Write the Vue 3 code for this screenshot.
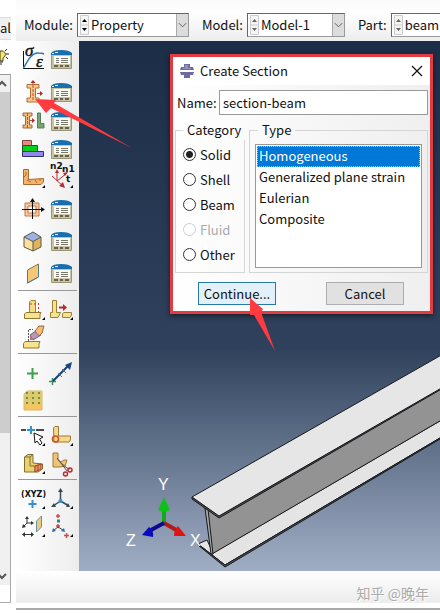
<script setup>
import { ref } from 'vue'

const module = ref('Property')
const model = ref('Model-1')
const part = ref('beam')

const sectionName = ref('section-beam')
const category = ref('Solid')
const type = ref('Homogeneous')

const categories = [
  { name: 'Solid' },
  { name: 'Shell' },
  { name: 'Beam' },
  { name: 'Fluid', disabled: true },
  { name: 'Other' }
]
const types = ['Homogeneous', 'Generalized plane strain', 'Eulerian', 'Composite']

const groups = [
  ['material', 'manager', 'section', 'manager', 'assign', 'manager', 'composite', 'manager',
    'beam-part', 'normals', 'skin', 'manager', 'solid', 'manager', 'shell', 'manager'],
  ['stringer', 'offset', 'eraser'],
  ['point', 'axis', 'mesh'],
  ['pick', 'corner', 'block', 'cut'],
  ['xyz', 'csys', 'plane', 'datum']
]
const withMenu = ['beam-part', 'normals', 'stringer', 'offset', 'pick', 'corner', 'block', 'xyz', 'csys', 'plane', 'datum']
</script>

<template>
  <div class="app">
    <aside class="side">
      <div class="tab">al</div>
      <div class="tip">
        <svg width="9" height="16" viewBox="0 0 9 16">
          <path d="M0 2C6 1 7 7 3 9V12H0Z" fill="#f6e36c" stroke="#4b451d" />
          <path d="M0 13H3M0 15H2M5 2L7 0M6 5H9M6 8L8 10" stroke="#222" />
        </svg>
      </div>
      <div class="scroll">
        <svg width="10" height="17" viewBox="0 0 10 17"><path d="M-2 11L2 7L6 11" fill="none" stroke="#555" stroke-width="2" /></svg>
        <div class="thumb"></div>
        <svg width="10" height="17" viewBox="0 0 10 17"><path d="M-2 6L2 10L6 6" fill="none" stroke="#555" stroke-width="2" /></svg>
      </div>
      <div class="side-end"></div>
    </aside>

    <div class="main">
      <header class="toolbar">
        <label for="module">Module:</label>
        <div class="combo combo-module">
          <svg class="spin dark" width="9" height="20" viewBox="0 0 9 20">
            <path d="M.5 .5H8.500V19.500H.5ZM.5 10H8.500" class="box" /><path d="M2 7L4.500 4L7 7ZM2 13L4.500 16L7 13Z" />
          </svg>
          <select id="module" v-model="module"><option>Property</option></select>
          <svg class="drop" width="12" height="22" viewBox="0 0 12 22"><path d="M2 9L6 13L10 9" /></svg>
        </div>
        <label for="model">Model:</label>
        <div class="combo combo-model">
          <svg class="spin" width="9" height="20" viewBox="0 0 9 20">
            <path d="M.5 .5H8.500V19.500H.5ZM.5 10H8.500" class="box" /><path d="M2 7L4.500 4L7 7ZM2 13L4.500 16L7 13Z" />
          </svg>
          <select id="model" v-model="model"><option>Model-1</option></select>
          <svg class="drop" width="12" height="22" viewBox="0 0 12 22"><path d="M2 9L6 13L10 9" /></svg>
        </div>
        <label for="part">Part:</label>
        <div class="combo combo-part">
          <svg class="spin" width="9" height="20" viewBox="0 0 9 20">
            <path d="M.5 .5H8.500V19.500H.5ZM.5 10H8.500" class="box" /><path d="M2 7L4.500 4L7 7ZM2 13L4.500 16L7 13Z" />
          </svg>
          <select id="part" v-model="part"><option>beam</option></select>
        </div>
      </header>

      <div class="work">
        <nav class="palette">
          <div v-for="(group, g) in groups" :key="g" class="group" :class="{ first: g === 0 }">
            <button v-for="(icon, i) in group" :key="i" class="tool" type="button" :aria-label="icon">
              <svg width="28" height="28" viewBox="0 0 28 28" fill="none">
                <g v-if="icon === 'material'">
                  <path d="M4.500 6V23.500H25" stroke="#111" />
                  <path d="M4.500 23C9 15 13 7 20 8Q23 8 25 9" stroke="#3279b0" stroke-width="1.500" />
                  <text x="6" y="11" class="greek">σ</text>
                  <text x="17" y="22" class="greek">ε</text>
                </g>
                <g v-else-if="icon === 'manager'">
                  <path d="M4.500 9V23.500H24.500V9" fill="#c9c4a4" stroke="#9a9578" />
                  <path d="M4 10V8Q6 5 14 5T25 8V10Z" fill="#176fb0" />
                  <path d="M5 8.500H7M8 7.500H11" stroke="#e8f3fa" />
                  <path d="M7 11H23V19H7Z" fill="#fbfbf5" />
                  <path d="M9 13.500H12M14 13.500H21M9 15.500H12M14 15.500H21M9 17.500H12M14 17.500H21" stroke="#77776d" />
                  <path d="M7 20H11V22H7ZM13 20H16V22H13ZM18 20H22V22H18Z" fill="#66634c" />
                </g>
                <g v-else-if="icon === 'section'">
                  <path d="M8 6.500H20V10H16.500V20H20V24H8V20H11.500V10H8Z" fill="#f8c78a" stroke="#b06f35" />
                  <path d="M14 3V22M18 15.500H22" stroke="#c4434b" stroke-dasharray="3 1" />
                  <path d="M11.500 5L14 2L16.500 5ZM21 13L24 15.500L21 18Z" fill="#b52a32" />
                </g>
                <g v-else-if="icon === 'assign'">
                  <path d="M4 6H13V9H10.500V18H13V21H4V18H6.500V9H4Z" fill="#f4bd79" stroke="#a1683a" />
                  <path d="M8.500 6V21M11 13.500H14" stroke="#c4434b" stroke-dasharray="3 1" />
                  <path d="M13 11L16 13.500L13 16Z" fill="#b52a32" />
                  <path d="M18.500 6H21.500V16.500H25V21H18.500Z" fill="#78a572" stroke="#508351" />
                </g>
                <g v-else-if="icon === 'composite'">
                  <path d="M3.500 5.500H12.500V10.500H3.500Z" fill="#e88880" stroke="#844" />
                  <path d="M3.500 10.500H18.500V16.500H3.500Z" fill="#00cf1b" stroke="#165e20" />
                  <path d="M3.500 16.500H24.500V21.500H3.500Z" fill="#9087ef" stroke="#34306d" />
                </g>
                <g v-else-if="icon === 'beam-part'">
                  <path d="M4.500 5.500H9.500V15.500L24.500 14.500V18L22 20.500H4.500Z" fill="#f3b569" stroke="#a66a32" />
                  <path d="M7 8V11L5 13M8 16L12 18M16 16L18 19M21 15V17" stroke="#a66a32" />
                </g>
                <g v-else-if="icon === 'normals'">
                  <path d="M5 12L17 23M10 17V7M10 17L20 9" stroke="#b72c34" />
                  <path d="M18 24L16 18L12 22ZM8 9L10 5L12 9ZM16 9L21 8L18 12Z" fill="#b72c34" />
                  <text x="3" y="5" class="tiny">n2</text>
                  <text x="15" y="8" class="tiny">n1</text>
                  <text x="19" y="18" class="tiny">t</text>
                </g>
                <g v-else-if="icon === 'skin'">
                  <path d="M6 8H20V21H6ZM9 11V18H17V11Z" fill="#f6c99c" stroke="#c47748" />
                  <path d="M13.500 24V5M3 14.500H23" stroke="#111" />
                  <path d="M11 7L13.500 3L16 7ZM22 12L26 14.500L22 17Z" fill="#111" />
                </g>
                <g v-else-if="icon === 'solid'">
                  <path d="M5 10L14 14.500V24L5 20Z" fill="#fbe09b" />
                  <path d="M14 14.500L22 10V20L14 24Z" fill="#dfb359" />
                  <path d="M5 10L14 5L22 10L14 14.500Z" fill="#9bb2e3" />
                  <path d="M5 10L14 5L22 10V20L14 24L5 20ZM5 10L14 14.500L22 10M14 14.500V24" stroke="#5d564b" />
                </g>
                <g v-else-if="icon === 'shell'">
                  <path d="M8.500 11L19.500 5V18L8.500 24Z" fill="#f6c777" stroke="#83704d" />
                  <path d="M8.500 24L19.500 18V9" stroke="#4c828d" />
                </g>
                <g v-else-if="icon === 'stringer'">
                  <path d="M10.500 16V6L12 4.500H16.500V16" fill="#f5dd88" stroke="#a5852f" />
                  <path d="M5.500 18L7 16.500H22L21 18V22.500H5.500Z" fill="#f5e38d" stroke="#8f7631" />
                  <path d="M11 8H18M19.500 7V16" stroke="#c33b2e" stroke-dasharray="2 2" />
                </g>
                <g v-else-if="icon === 'offset'">
                  <path d="M5.500 4.500H9.500V16.500H13.500L11 21.500H3.500V16.500H5.500Z" fill="#f5e38d" stroke="#9b8135" />
                  <path d="M15.500 17.500L17 16.500H24.500V19L23 21.500H15.500Z" fill="#f5e38d" stroke="#9b8135" />
                  <path d="M12 11.500H17" stroke="#bf2328" stroke-width="2" /><path d="M16 8L20 11.500L16 15Z" fill="#bf2328" />
                </g>
                <g v-else-if="icon === 'eraser'">
                  <path d="M4.500 19.500L6 17.500H21L20 20V24H4.500Z" fill="#f5e38d" stroke="#8f7631" />
                  <path d="M9.500 17V5.500H14" stroke="#555" stroke-dasharray="2 1" />
                  <path d="M11 11L18 6L22 11L14 16Z" fill="#b79ab8" stroke="#755f7e" />
                  <path d="M16 7L20 2H25L23 9L20 12Z" fill="#f4bb7a" stroke="#9b693a" />
                  <path d="M11 11L14 16H11Z" fill="#ca6b86" />
                </g>
                <path v-else-if="icon === 'point'" d="M13.500 9V20M8 14.500H19" stroke="#3fa04a" stroke-width="2" />
                <g v-else-if="icon === 'axis'">
                  <path d="M2 22.500H9M5.500 19V26" stroke="#368f57" stroke-width="1.500" />
                  <path d="M6 22L21 7" stroke="#173f70" stroke-width="2" />
                  <path d="M25 3L18 6L23 11Z" fill="#184783" />
                  <path d="M11 14L15 18M15 10L19 14" stroke="#488978" />
                </g>
                <g v-else-if="icon === 'mesh'">
                  <path d="M5 7L8 4H23V23H5Z" fill="#f5c561" stroke="#dfb65a" />
                  <path d="M5 7L8 4H23V16H5Z" fill="#dcca70" />
                  <path d="M8 5V17M14 5V17M20 5V17" stroke="#77912e" stroke-width="2" stroke-dasharray="2 3" />
                </g>
                <g v-else-if="icon === 'pick'">
                  <path d="M2 8H7M17 8H25" stroke="#111" stroke-width="1.500" />
                  <path d="M12 4V12M8 8H16" stroke="#3292cf" stroke-width="2" />
                  <path d="M15 11L24 15L20.500 17L23 21L21 23L18 19L16 21Z" fill="#fff" stroke="#111" />
                </g>
                <g v-else-if="icon === 'corner'">
                  <path d="M6.500 6L8 4.500H11.500V14H23.500V18L22 20H7Z" fill="#f6da8a" stroke="#9c7838" />
                  <circle cx="8.500" cy="17" r="3" stroke="#cc4f2a" stroke-width="1.500" />
                </g>
                <g v-else-if="icon === 'block'">
                  <path d="M5.500 7L9 4.500H14V13L23.500 14V19L19 22H5.500Z" fill="#e9d16d" stroke="#7f7032" />
                  <path d="M5.500 7H11V16H16V22M11 7L14 4.500M16 16L23 14" stroke="#7f7032" />
                  <path d="M16 16L22 14V19L16 22ZM19 15V21" fill="#e49568" stroke="#b33e2d" />
                </g>
                <g v-else-if="icon === 'cut'">
                  <path d="M6 3H11V10L14 12L17 10H20L18 16L13 17H6Z" fill="#f1c475" stroke="#9c7838" />
                  <path d="M10 8L20 21M14 13L20 18L23 19" stroke="#5a4747" />
                  <circle cx="18.500" cy="24" r="2" stroke="#b72c34" stroke-width="1.500" /><circle cx="23" cy="20" r="2" stroke="#b72c34" stroke-width="1.500" />
                </g>
                <g v-else-if="icon === 'xyz'">
                  <text x="2" y="12" class="tiny thin">(XYZ)</text>
                  <path d="M13.500 15V23M9.500 19H17.500" stroke="#3292cf" stroke-width="2" />
                </g>
                <g v-else-if="icon === 'csys'">
                  <path d="M13.500 16V5M13.500 16L6 21M13.500 16L22 21" stroke="#344b5a" stroke-width="1.500" />
                  <path d="M11 7L13.500 3L16 7ZM4 22L7 18L9 22ZM23 22L19 22L21 18Z" fill="#344b5a" />
                  <circle cx="13.500" cy="16" r="2" fill="#3292cf" />
                </g>
                <g v-else-if="icon === 'plane'">
                  <path d="M8 10V5M8 10L5 13M8 10H13M5 21.500H13" stroke="#333" />
                  <path d="M6 6L8 3L10 6ZM3 15L4 11L7 14ZM12 8L15 10L12 12ZM6 19L3 21.500L6 24ZM12 19L15 21.500L12 24Z" fill="#333" />
                  <path d="M17.500 8L22.500 3V14L17.500 19Z" fill="#e6cd80" stroke="#6c90a0" />
                </g>
                <g v-else-if="icon === 'datum'">
                  <path d="M11 1V5M9 3H13M9 13H13M11 11V15M17 22.500H22M19.500 20V25" stroke="#d04a4a" stroke-width="1.500" />
                  <path d="M10 8H13" stroke="#317f9a" stroke-width="3" />
                  <path d="M11 14L7 17M11 14L16 17" stroke="#344b5a" />
                  <path d="M5 19L6 15L9 18ZM18 19L14 18L17 15Z" fill="#286ca5" />
                </g>
                <path v-if="withMenu.includes(icon)" d="M26 21V24H23Z" fill="#000" />
              </svg>
            </button>
          </div>
        </nav>

        <main class="viewport">
          <svg class="scene" viewBox="79 41 361 530" preserveAspectRatio="xMinYMax slice">
            <g stroke="#15181c" stroke-linejoin="round">
              <path d="M198 544L225 565L445 435V418L213 553L207 540Z" fill="#e4e4e4" />
              <path d="M198 544L225 565L445 435V436L225 567L198 545Z" fill="#555" />
              <path d="M206 508L212 554L445 418V385L219 516Z" fill="#939393" />
              <path d="M205 508L211 554L213 554L208 509Z" fill="#aaa" />
              <path d="M192 497L219 516L445 386V387L219 518L192 499Z" fill="#555" />
              <path d="M192 497L219 516L445 386V353Z" fill="#e6e6e6" />
            </g>
            <path d="M164 523V508" stroke="#12a91c" stroke-width="4" />
            <path d="M158 510L164 497L170 510Q164 513 158 510Z" fill="#0fc01a" />
            <path d="M164 523L178 531" stroke="#b51818" stroke-width="4" />
            <path d="M178 526L186 536L174 536Q174 530 178 526Z" fill="#df1414" />
            <path d="M164 523L151 530" stroke="#0b0b8c" stroke-width="4" />
            <path d="M149 527L142 535L153 537Q154 530 149 527Z" fill="#0909bd" />
            <g class="axes">
              <text x="158" y="490">Y</text>
              <text x="126" y="546">Z</text>
              <text x="190" y="546">X</text>
            </g>
          </svg>

          <form class="dialog" @submit.prevent>
            <div class="title">
              <svg width="16" height="16" viewBox="0 0 16 16">
                <path d="M5 1H11V4H14L15 7H1L2 4H5ZM1 9H15L14 12H11V15H5V12H2Z" fill="#6c6c9d" />
                <path d="M6 2H9V5H12V6H4V5H6Z" fill="#9393bd" />
              </svg>
              <h2>Create Section</h2>
              <button class="close" type="button" aria-label="Close">
                <svg width="12" height="12" viewBox="0 0 12 12"><path d="M1 1L11 11M11 1L1 11" stroke="#111" stroke-width="1.200" /></svg>
              </button>
            </div>
            <div class="name">
              <label for="name">Name:</label>
              <input id="name" v-model="sectionName" type="text">
            </div>
            <div class="sets">
              <fieldset class="category">
                <legend>Category</legend>
                <label v-for="c in categories" :key="c.name" :class="{ off: c.disabled }">
                  <input v-model="category" type="radio" name="category" :value="c.name" :disabled="c.disabled">
                  {{ c.name }}
                </label>
              </fieldset>
              <fieldset class="type">
                <legend>Type</legend>
                <select v-model="type" size="5" aria-label="Type">
                  <option v-for="t in types" :key="t">{{ t }}</option>
                </select>
              </fieldset>
            </div>
            <div class="actions">
              <button class="btn primary" type="submit">Continue...</button>
              <button class="btn" type="button">Cancel</button>
            </div>
            <svg class="pointer" width="28" height="54" viewBox="0 0 28 54">
              <path d="M1 0L14 11L12 14L26 53L5 17L1 17Z" fill="#ff3b40" />
            </svg>
          </form>
        </main>
      </div>

      <footer class="status">知乎 @晚年</footer>
    </div>

    <svg class="callout" width="100" height="52" viewBox="0 0 100 52">
      <path d="M1 1L22 2L20 5L98 50L17 10L12 15Z" fill="#ff3b40" />
    </svg>
  </div>
</template>

<style>
body {
  margin: 0;
  background: #fff;
}
</style>

<style scoped>
* {
  box-sizing: border-box;
}

.app {
  position: relative;
  display: flex;
  min-height: 100vh;
  overflow: hidden;
  font-family: 'Noto Sans CJK SC', sans-serif;
  font-size: 13px;
  line-height: 20px;
  color: #111;
}

button, input, select {
  font: inherit;
  color: inherit;
}

svg {
  display: block;
  flex: none;
}

.side {
  flex: none;
  width: 11px;
  margin-right: 5px;
  padding-top: 17px;
  display: flex;
  flex-direction: column;
}

.tab {
  height: 23px;
  overflow: hidden;
  background: #f0f0f0;
  border-top: 1px solid #ddd;
  border-bottom: 1px solid #ddd;
}

.tip {
  height: 34px;
  padding-top: 9px;
}

.scroll {
  flex: 1;
  display: flex;
  flex-direction: column;
  background: #f0f0f0;
  border-top: 1px solid #999;
  border-right: 1px solid #aaa;
}

.thumb {
  flex: none;
  height: 341px;
  margin-bottom: auto;
  background: #cdcdcd;
}

.side-end {
  height: 18px;
  margin-bottom: 11px;
  border-right: 1px solid #aaa;
  border-bottom: 1px solid #aaa;
}

.main {
  flex: 1;
  min-width: 0;
  display: flex;
  flex-direction: column;
  padding-bottom: 4px;
}

.toolbar {
  height: 41px;
  padding: 8px 0 0 8px;
  display: flex;
  align-items: center;
  overflow: hidden;
  white-space: nowrap;
  background: linear-gradient(#f9f9f9, #fff 30%, #ededed);
}

.toolbar label {
  flex: none;
  margin-right: 4px;
}

.combo {
  flex: none;
  height: 24px;
  margin-right: 13px;
  padding: 0 0 0 2px;
  display: flex;
  align-items: center;
  background: #fff;
  border: 1px solid #999;
  border-top-color: #666;
  border-left-color: #666;
}

.combo-module {
  width: 112px;
}

.combo-model {
  width: 98px;
}

.combo-part {
  width: 112px;
}

.combo select {
  flex: 1;
  min-width: 0;
  height: 22px;
  padding: 0 0 0 2px;
  appearance: none;
  background: none;
  border: 0;
}

.spin {
  fill: #666;
}

.spin.dark {
  fill: #000;
}

.spin .box {
  fill: #f5f5f5;
  stroke: #ccc;
}

.drop {
  background: #dcdcdc;
  border-left: 1px solid #aaa;
  fill: none;
  stroke: #555;
}

.work {
  flex: 1;
  display: flex;
}

.palette {
  flex: none;
  width: 63px;
  padding: 0 2px;
  background: linear-gradient(90deg, #fff, #ededed);
}

.group {
  display: grid;
  grid-template-columns: 28px 28px;
  grid-auto-rows: 28px;
  align-items: center;
  padding: 5px 0 1px 1px;
  border-top: 1px solid #999;
}

.group.first {
  grid-template-rows: 36px 30px 28px 28px 30px 32px 32px 32px;
  padding: 0 0 1px 1px;
  border-top: 0;
}

.tool {
  padding: 0;
  background: none;
  border: 0;
}

.tool svg {
  overflow: visible;
}

.greek {
  font: italic 17px 'Liberation Serif', serif;
  fill: #111;
  stroke: #111;
  stroke-width: .4px;
}

.tiny {
  font: bold 9px 'DejaVu Sans', sans-serif;
  fill: #111;
}

.tiny.thin {
  font-size: 8px;
}

.viewport {
  position: relative;
  flex: 1;
  min-width: 0;
  background: linear-gradient(#1b2d47, #2f415c 58%, #a0aec5);
}

.scene {
  position: absolute;
  inset: 0;
  width: 100%;
  height: 100%;
}

.axes {
  font: 16px 'Liberation Sans', sans-serif;
  fill: #fff;
}

.dialog {
  position: absolute;
  top: 13px;
  left: 91px;
  width: 263px;
  background: linear-gradient(90deg, #fff, #efefef);
  border: 3px solid #e23b43;
  box-shadow: 0 2px 5px #0008;
}

.title {
  height: 28px;
  padding: 0 7px 0 6px;
  display: flex;
  align-items: center;
  background: #fff;
}

.title h2 {
  flex: 1;
  margin: 0 0 0 5px;
  font-size: 13px;
  font-weight: normal;
}

.close {
  padding: 0;
  background: none;
  border: 0;
}

.name {
  padding: 5px 2px 0 4px;
  display: flex;
  align-items: center;
}

.name label {
  width: 42px;
}

.name input {
  flex: 1;
  min-width: 0;
  height: 25px;
  padding: 0 3px;
  border: 1px solid #999;
  outline: 0;
}

.sets {
  display: flex;
  gap: 4px;
  padding: 5px 2px 0;
}

fieldset {
  min-width: 0;
  margin: 0;
  border: 1px solid #d5d5d5;
}

legend {
  padding: 0 4px;
}

.category {
  width: 70px;
  padding: 2px 0 4px 7px;
}

.category label {
  height: 25px;
  display: flex;
  align-items: center;
  gap: 4px;
}

.category .off {
  color: #aaa;
}

.category input {
  flex: none;
  width: 13px;
  height: 13px;
  margin: 0;
  appearance: none;
  background: #fff;
  border: 1px solid #333;
  border-radius: 50%;
}

.category input:checked {
  background: radial-gradient(#222 3px, #fff 4px);
}

.category input:disabled {
  border-color: #ccc;
}

.type {
  flex: 1;
  padding: 4px 5px;
}

.type legend {
  margin-left: 3px;
}

.type select {
  display: block;
  width: 100%;
  height: 124px;
  padding: 1px;
  overflow: hidden;
  background: #fff;
  border: 1px solid #999;
  border-radius: 0;
  outline: 0;
}

.type option {
  height: 21px;
  min-height: 21px;
  padding: 0 2px;
  line-height: 21px;
}

.type option:checked {
  background: linear-gradient(#0078d7, #0078d7);
  outline: 1px dotted #9cc8ec;
  outline-offset: -1px;
  -webkit-text-fill-color: #fff;
}

.actions {
  display: flex;
  justify-content: space-between;
  padding: 9px 26px 6px 25px;
}

.btn {
  width: 78px;
  height: 23px;
  padding: 0;
  background: #e1e1e1;
  border: 1px solid #adadad;
}

.btn.primary {
  background: #e2f0fa;
  border-color: #2878a8;
}

.pointer {
  position: absolute;
  left: 76px;
  top: 241px;
}

.callout {
  position: absolute;
  left: 34px;
  top: 98px;
}

.status {
  height: 39px;
  padding: 12px 11px 0 0;
  text-align: right;
  font-size: 14px;
  color: #aaa;
  text-shadow: 1px 1px 0 #fff;
  background: linear-gradient(#fff, #ececec 85%, #fff 86%);
  border-bottom: 2px solid #aaa;
}
</style>
